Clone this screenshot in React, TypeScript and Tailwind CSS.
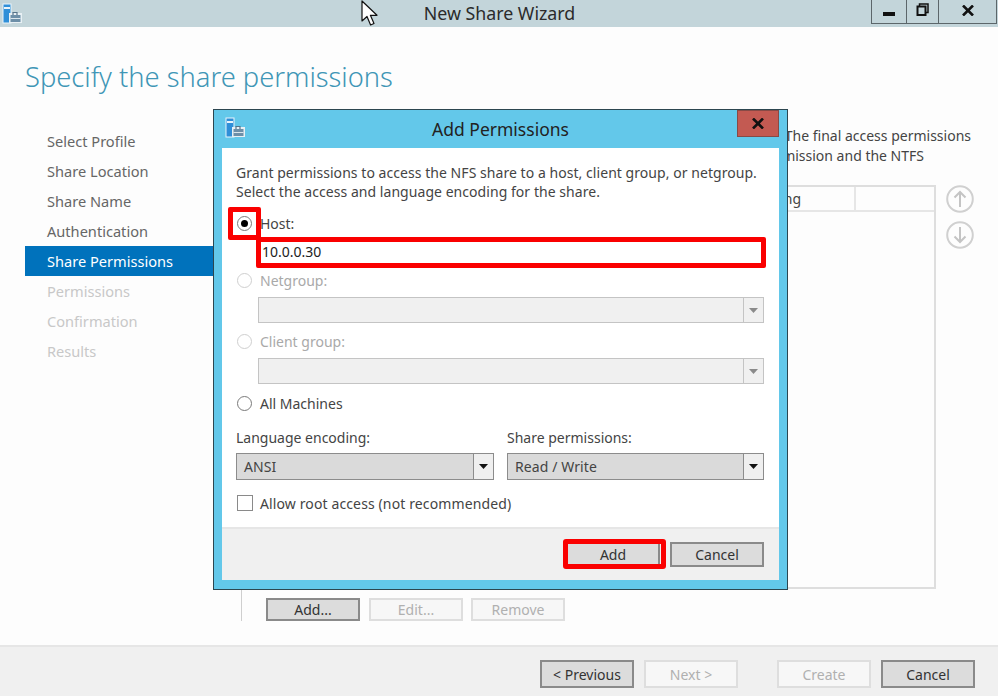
const steps = [
  { label: 'Select Profile', state: 'done' },
  { label: 'Share Location', state: 'done' },
  { label: 'Share Name', state: 'done' },
  { label: 'Authentication', state: 'done' },
  { label: 'Share Permissions', state: 'active' },
  { label: 'Permissions', state: 'off' },
  { label: 'Confirmation', state: 'off' },
  { label: 'Results', state: 'off' },
]

function AppIcon() {
  return (
    <svg width="21" height="21" viewBox="0 0 21 21" className="block">
      <rect x="1" y="1" width="8" height="19" fill="#2f8fd8" stroke="#e8f4fb" strokeWidth="1" />
      <rect x="2" y="4" width="6" height="2" fill="#e8f4fb" />
      <rect x="7" y="10" width="13" height="10" fill="#e8f0f4" />
      <rect x="8.5" y="12" width="10" height="7" fill="#6d8fa8" />
      <path d="M11 12V9.5h4V12" fill="none" stroke="#55738a" strokeWidth="1.2" />
      <rect x="8.5" y="15" width="10" height="1" fill="#dbe6ec" />
    </svg>
  )
}

function Cursor() {
  return (
    <svg width="17" height="27" viewBox="0 0 17 27" className="block">
      <path d="M1 1v20l5-4.500 3.600 8.500 3.400-1.500-3.600-8.200h6.600z" fill="#fff" stroke="#111" strokeWidth="1.2" strokeLinejoin="round" />
    </svg>
  )
}

function Radio({ on, off }: { on?: boolean; off?: boolean }) {
  return (
    <span className={`flex h-[15px] w-[15px] shrink-0 items-center justify-center rounded-full border bg-white ${off ? 'border-[#cfcfcf]' : 'border-[#7a7a7a]'}`}>
      {on && <span className="h-[7px] w-[7px] rounded-full bg-black" />}
    </span>
  )
}

function RadioRow({ label, on, off, className }: { label: string; on?: boolean; off?: boolean; className: string }) {
  return (
    <div className={`flex h-5 items-center ${className}`}>
      <span className="ml-px"><Radio on={on} off={off} /></span>
      <span className={`ml-2 ${off ? 'text-[#a9a9a9]' : ''}`}>{label}</span>
    </div>
  )
}

function Arrow({ off }: { off?: boolean }) {
  return (
    <svg width="9" height="5" viewBox="0 0 9 5" className="block">
      <path d="M0 0h9L4.500 5z" fill={off ? '#8a8a8a' : '#111'} />
    </svg>
  )
}

function DropDown({ value, off, width, className = '' }: { value?: string; off?: boolean; width: string; className?: string }) {
  return (
    <div className={`flex ${width} border ${off ? 'h-[26px] border-[#c4c4c4] bg-[#f0f0f0]' : 'h-[27px] border-[#8c8c8c] bg-[#dadada]'} ${className}`}>
      <span className="flex-1 pl-[7px] leading-[25px] tracking-[0.1px]">{value}</span>
      <span className={`flex w-5 items-center justify-center border-l ${off ? 'border-[#c4c4c4]' : 'border-[#8c8c8c] bg-[#efefef]'}`}>
        <Arrow off={off} />
      </span>
    </div>
  )
}

function Btn({ label, off, h = 'h-[28px]' }: { label: string; off?: boolean; h?: string }) {
  return (
    <div className={`flex ${h} w-[94px] items-center justify-center border-2 ${off ? 'border-[#dedede] bg-[#f7f7f7] text-[#b0b0b0]' : 'border-[#8a8a8a] bg-[#dcdcdc] text-[#333]'}`}>
      {label}
    </div>
  )
}

function ArrowCircle({ d }: { d: string }) {
  return (
    <svg width="28" height="28" viewBox="0 0 28 28" className="block">
      <circle cx="14" cy="14" r="12.800" fill="none" stroke="#d0d0d0" strokeWidth="2" />
      <path d={d} fill="none" stroke="#c4c4c4" strokeWidth="2" />
    </svg>
  )
}

function Dialog() {
  return (
    <div className="absolute left-[213px] top-[109px] flex h-[481px] w-[575px] flex-col border border-[#2c4650] bg-[#63c8ea]">
      <div className="relative flex h-[38px] shrink-0 items-center justify-center text-[17.500px] text-[#222]">
        <span className="absolute left-[11px] top-[7px]"><AppIcon /></span>
        Add Permissions
        <div className="absolute right-[8px] top-0 flex h-[27px] w-[42px] items-center justify-center border border-[#874a46] bg-[#c35a52]">
          <svg width="12" height="11" viewBox="0 0 12 11"><path d="M1 0.500l10 10M11 0.500l-10 10" stroke="#111" strokeWidth="2.600" /></svg>
        </div>
      </div>
      <div className="mx-[8px] mb-[9px] flex flex-1 flex-col bg-white">
        <div className="flex h-[379px] flex-col px-[14px] pt-[15px]">
          <p className="leading-[19px] tracking-[0.05px]">
            Grant permissions to access the NFS share to a host, client group, or netgroup.
            <br />
            Select the access and language encoding for the share.
          </p>
          <RadioRow label="Host:" on className="mt-[12px]" />
          <div className="ml-[22px] mt-[6px] h-[26px] pl-[4px] leading-[26px] text-[#222]">10.0.0.30</div>
          <RadioRow label="Netgroup:" off className="mt-[5px]" />
          <DropDown off width="w-[506px]" className="ml-[22px] mt-[7px]" />
          <RadioRow label="Client group:" off className="mt-[8px]" />
          <DropDown off width="w-[506px]" className="ml-[22px] mt-[7px]" />
          <RadioRow label="All Machines" className="mt-[9px]" />
          <div className="mt-[15px] flex gap-[13px]">
            <div>
              <div className="h-5 leading-5">Language encoding:</div>
              <DropDown value="ANSI" width="w-[258px]" className="mt-[5px]" />
            </div>
            <div>
              <div className="h-5 leading-5">Share permissions:</div>
              <DropDown value="Read / Write" width="w-[257px]" className="mt-[5px]" />
            </div>
          </div>
          <div className="mt-[13px] flex h-5 items-center">
            <span className="ml-px h-[16px] w-[16px] border border-[#8a8a8a] bg-white" />
            <span className="ml-[7px] tracking-[0.12px]">Allow root access (not recommended)</span>
          </div>
        </div>
        <div className="flex flex-1 justify-end gap-[10px] border-t-2 border-[#e6e6e6] bg-[#f0f0f0] pr-[15px] pt-[13px]">
          <Btn label="Add" h="h-[25px]" />
          <Btn label="Cancel" h="h-[25px]" />
        </div>
      </div>
      {/* red marks from the screenshot */}
      <div className="absolute left-[14px] top-[97px] h-[33px] w-[33px] rounded-[2px] border-[5px] border-[#fa0000]" />
      <div className="absolute left-[42px] top-[127px] h-[31px] w-[510px] rounded-[2px] border-[5px] border-[#fa0000]" />
      <div className="absolute left-[349px] top-[429px] h-[30px] w-[103px] rounded-[3px] border-[5px] border-[#fa0000]" />
    </div>
  )
}

export default function App() {
  return (
    <div className="relative flex h-[696px] w-[998px] flex-col overflow-hidden bg-[#fdfdfd] font-['Noto_Sans',sans-serif] text-[14px] text-[#444]">
      <div className="relative flex h-[27px] shrink-0 items-center justify-center bg-[#c3d5da] text-[17.800px] text-[#2b2b2b]">
        <span className="absolute left-[2px] top-[3px]"><AppIcon /></span>
        <span className="ml-px">New Share Wizard</span>
        <div className="absolute right-px top-0 flex h-[24px] border-x border-b border-[#5c666a]">
          <div className="flex w-[35px] items-center justify-center border-r border-[#5c666a] pt-[4px]">
            <span className="h-[4px] w-[12px] bg-[#111]" />
          </div>
          <div className="flex w-[32px] items-center justify-center border-r border-[#5c666a] pb-[4px]">
            <svg width="13" height="13" viewBox="0 0 13 13">
              <path d="M3.500 3V1h8.500v8.500H9.500" fill="none" stroke="#111" strokeWidth="1.500" />
              <rect x="1.500" y="3.500" width="8" height="8.500" fill="none" stroke="#111" strokeWidth="2" />
            </svg>
          </div>
          <div className="flex w-[57px] items-center justify-center pb-[3px]">
            <svg width="12" height="11" viewBox="0 0 12 11"><path d="M1 0.500l10 10M11 0.500l-10 10" stroke="#111" strokeWidth="2.600" /></svg>
          </div>
        </div>
      </div>

      <h1 className="ml-[25px] mt-[30px] h-[40px] text-[27.300px] font-light leading-[40px] text-[#3f96b6]">Specify the share permissions</h1>

      <div className="mt-[29px] flex min-h-0 flex-1">
        <div className="ml-[25px] w-[188px] shrink-0">
          {steps.map((s) => (
            <div
              key={s.label}
              className={`h-[30px] pl-[22px] text-[14.600px] leading-[30px] ${s.state === 'active' ? 'bg-[#0072bc] text-white' : s.state === 'off' ? 'text-[#c8c8c8]' : 'text-[#666]'}`}
            >
              {s.label}
            </div>
          ))}
        </div>
        <div className="ml-[28px] flex h-[495px] w-[730px] flex-col border-l border-[#cfcfcf]">
          <div className="text-right leading-[20px]">
            <p>The final access permissions</p>
            <p className="pr-[47px]">permission and the NTFS</p>
          </div>
          <div className="mt-[19px] flex">
            <div className="flex h-[404px] w-[694px] shrink-0 flex-col border-2 border-[#dedede]">
              <div className="flex h-[25px] shrink-0 border-b-2 border-[#e6e6e6]">
                <div className="w-[612px] border-r-2 border-[#e6e6e6] pr-[53px] text-right leading-[24px]">Language Encoding</div>
                <div className="flex-1" />
              </div>
            </div>
            <div className="ml-[10px] flex shrink-0 flex-col gap-2">
              <ArrowCircle d="M14 22V7M8.500 12.500L14 7l5.500 5.500" />
              <ArrowCircle d="M14 6v15M8.500 15.500L14 21l5.500-5.500" />
            </div>
          </div>
          <div className="ml-[24px] mt-[9px] flex">
            <Btn label="Add..." h="h-[23px]" />
            <div className="ml-[9px]"><Btn label="Edit..." off h="h-[23px]" /></div>
            <div className="ml-[8px]"><Btn label="Remove" off h="h-[23px]" /></div>
          </div>
        </div>
      </div>

      <div className="flex h-[51px] shrink-0 items-start border-t-2 border-[#e6e6e6] bg-[#f0f0f0] pl-[540px] pt-[13px]">
        <Btn label="< Previous" />
        <div className="ml-[10px]"><Btn label="Next >" off /></div>
        <div className="ml-[39px]"><Btn label="Create" off /></div>
        <div className="ml-[10px]"><Btn label="Cancel" /></div>
      </div>

      <Dialog />
      <span className="absolute left-[361px] top-0"><Cursor /></span>
    </div>
  )
}
